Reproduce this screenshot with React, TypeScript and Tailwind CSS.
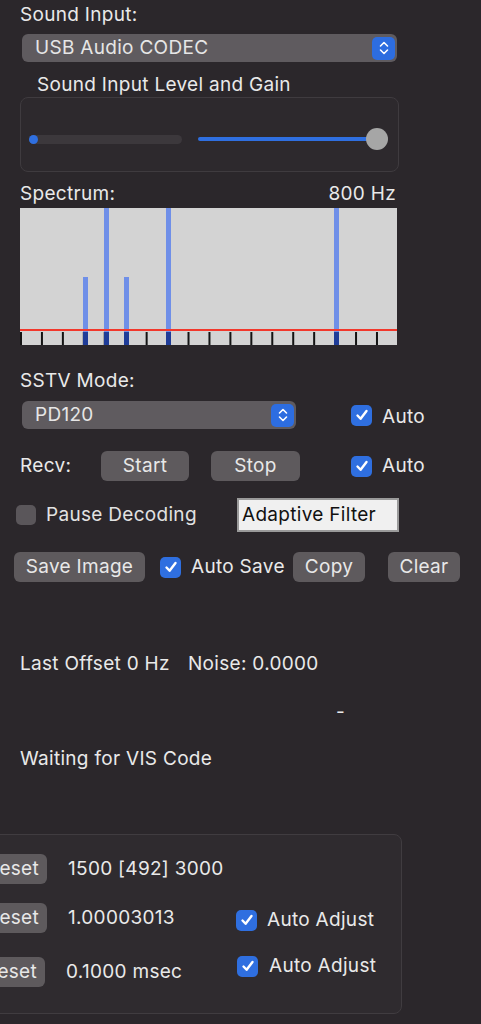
import React from "react";

const ticks = Array.from({ length: 18 }, (_, i) => 1 + i * 20.94);

const bars = [
  { x: 63, top: 69 },
  { x: 84, top: 0 },
  { x: 104, top: 69 },
  { x: 146, top: 0 },
  { x: 314, top: 0 },
];

function Stepper() {
  return (
    <div className="flex h-[23px] w-[23px] items-center justify-center rounded-[5px] bg-[#2d6de0]">
      <svg width="12" height="16" viewBox="0 0 12 16" fill="none" stroke="white" strokeWidth="1.6" strokeLinecap="round" strokeLinejoin="round">
        <path d="M2.5 6 L6 2.5 L9.5 6" />
        <path d="M2.5 10 L6 13.5 L9.5 10" />
      </svg>
    </div>
  );
}

function Dropdown({ label, width }: { label: string; width: string }) {
  return (
    <div className={`flex h-[28px] ${width} items-center justify-between rounded-[6px] bg-[#5f5b5f] pl-[13px] pr-[2px] text-[#e6e6e6]`}>
      <span>{label}</span>
      <Stepper />
    </div>
  );
}

function Check({ on = true }: { on?: boolean }) {
  if (!on) {
    return <div className="h-[20px] w-[20px] shrink-0 rounded-[5px] bg-[#5a565a]" />;
  }
  return (
    <div className="flex h-[21px] w-[21px] shrink-0 items-center justify-center rounded-[5px] bg-[#2f6fe0]">
      <svg width="14" height="14" viewBox="0 0 14 14" fill="none" stroke="white" strokeWidth="2.4" strokeLinecap="round" strokeLinejoin="round">
        <path d="M2.5 7.5 L5.6 10.8 L11.5 3" />
      </svg>
    </div>
  );
}

function Btn({ label, className }: { label: string; className: string }) {
  return (
    <div className={`flex h-[30px] shrink-0 items-center justify-center rounded-[6px] bg-[#5e5a5d] text-[#e8e8e8] ${className}`}>
      {label}
    </div>
  );
}

// the calibration buttons sit partly outside the window, label pinned right
function EdgeBtn({ className }: { className: string }) {
  return (
    <div className={`flex h-[30px] shrink-0 items-center justify-end rounded-[6px] bg-[#5e5a5d] pr-[8px] text-[#e8e8e8] ${className}`}>
      Reset
    </div>
  );
}

function Spectrum() {
  return (
    <svg width="377" height="137" viewBox="0 0 377 137" className="block">
      <rect x="0" y="0" width="377" height="137" fill="#d3d3d3" />
      {ticks.map((t, i) => (
        <rect key={i} x={t - 1} y="124" width="2" height="13" fill="#141414" />
      ))}
      {bars.map((b, i) => (
        <g key={i}>
          <rect x={b.x} y={b.top} width="5" height={124 - b.top} fill="#6f8fe8" />
          <rect x={b.x} y="124" width="5" height="13" fill="#1f3c98" />
        </g>
      ))}
      <rect x="0" y="121" width="377" height="2" fill="#f2382c" />
    </svg>
  );
}

export default function App() {
  return (
    <div className="h-[1024px] w-[481px] overflow-hidden bg-[#2b272b] font-['Inter','Liberation_Sans',sans-serif] text-[19px] leading-[22px] tracking-[0.3px] text-[#e9e9e9]">
      <div className="ml-[20px] mt-[4px] flex h-[22px] items-center">Sound Input:</div>

      <div className="ml-[22px] mt-[8px]">
        <Dropdown label="USB Audio CODEC" width="w-[375px]" />
      </div>

      <div className="ml-[37px] mt-[12px] flex h-[22px] items-center">Sound Input Level and Gain</div>

      {/* level / gain box */}
      <div className="ml-[20px] mt-[1px] flex h-[75px] w-[379px] items-center rounded-[8px] border border-[#3f3b3f] bg-[#2d292d] pt-[9px]">
        <div className="ml-[8px] flex h-[9px] w-[153px] items-center rounded-full bg-[#3c383c]">
          <div className="h-[9px] w-[9px] rounded-full bg-[#2f6fe0]" />
        </div>
        <div className="ml-[16px] flex items-center">
          <div className="h-[4px] w-[172px] rounded-l-full bg-[#2f6fe0]" />
          <div className="-ml-[4px] h-[22px] w-[22px] rounded-full bg-[#a6a6a6]" />
        </div>
      </div>

      <div className="ml-[20px] mt-[11px] flex h-[22px] w-[377px] items-center justify-between pr-[1px]">
        <span>Spectrum:</span>
        <span>800 Hz</span>
      </div>

      <div className="ml-[20px] mt-[3px]">
        <Spectrum />
      </div>

      <div className="ml-[20px] mt-[25px] flex h-[22px] items-center">SSTV Mode:</div>

      <div className="ml-[22px] mt-[9px] flex h-[28px] items-center">
        <Dropdown label="PD120" width="w-[274px]" />
        <div className="ml-[55px] flex items-center gap-[10px]">
          <Check />
          <span className="mt-[3px]">Auto</span>
        </div>
      </div>

      <div className="ml-[20px] mt-[22px] flex h-[30px] items-center">
        <span className="w-[81px]">Recv:</span>
        <Btn label="Start" className="w-[88px]" />
        <Btn label="Stop" className="ml-[22px] w-[89px]" />
        <div className="ml-[51px] flex items-center gap-[10px]">
          <Check />
          <span>Auto</span>
        </div>
      </div>

      <div className="ml-[16px] mt-[17px] flex h-[34px] items-center">
        <div className="flex w-[221px] items-center gap-[10px]">
          <Check on={false} />
          <span className="text-[#e2e2e2]">Pause Decoding</span>
        </div>
        <div className="flex h-[34px] w-[162px] items-center border-2 border-[#9a9a9a] bg-[#f0f0f0] pl-[3px] text-[#111]">
          Adaptive Filter
        </div>
      </div>

      <div className="ml-[14px] mt-[20px] flex h-[30px] items-center">
        <Btn label="Save Image" className="w-[131px]" />
        <div className="ml-[15px]">
          <Check />
        </div>
        <span className="ml-[10px] w-[102px]">Auto Save</span>
        <Btn label="Copy" className="w-[72px]" />
        <Btn label="Clear" className="ml-[23px] w-[72px]" />
      </div>

      <div className="ml-[20px] mt-[71px] flex h-[22px] items-center">
        <span className="w-[168px]">Last Offset 0 Hz</span>
        <span>Noise: 0.0000</span>
      </div>

      <div className="ml-[336px] mt-[26px] flex h-[22px] items-center">-</div>

      <div className="ml-[20px] mt-[25px] flex h-[22px] items-center">Waiting for VIS Code</div>

      {/* calibration box, left edge runs off the window */}
      <div className="-ml-[40px] mt-[64px] h-[180px] w-[442px] rounded-[8px] border border-[#403c40] bg-[#2f2b2f] pt-[19px]">
        <div className="ml-[13px] flex h-[30px] items-center">
          <EdgeBtn className="w-[73px]" />
          <span className="ml-[21px]">1500 [492] 3000</span>
        </div>

        <div className="ml-[13px] mt-[19px] flex h-[30px] items-center">
          <EdgeBtn className="w-[73px]" />
          <span className="ml-[21px] w-[168px]">1.00003013</span>
          <div className="mt-[4px] flex items-center gap-[10px]">
            <Check />
            <span>Auto Adjust</span>
          </div>
        </div>

        <div className="ml-[13px] mt-[24px] flex h-[30px] items-center">
          <EdgeBtn className="w-[71px]" />
          <span className="ml-[21px] w-[171px]">0.1000 msec</span>
          <div className="mb-[12px] flex items-center gap-[11px]">
            <Check />
            <span>Auto Adjust</span>
          </div>
        </div>
      </div>
    </div>
  );
}
